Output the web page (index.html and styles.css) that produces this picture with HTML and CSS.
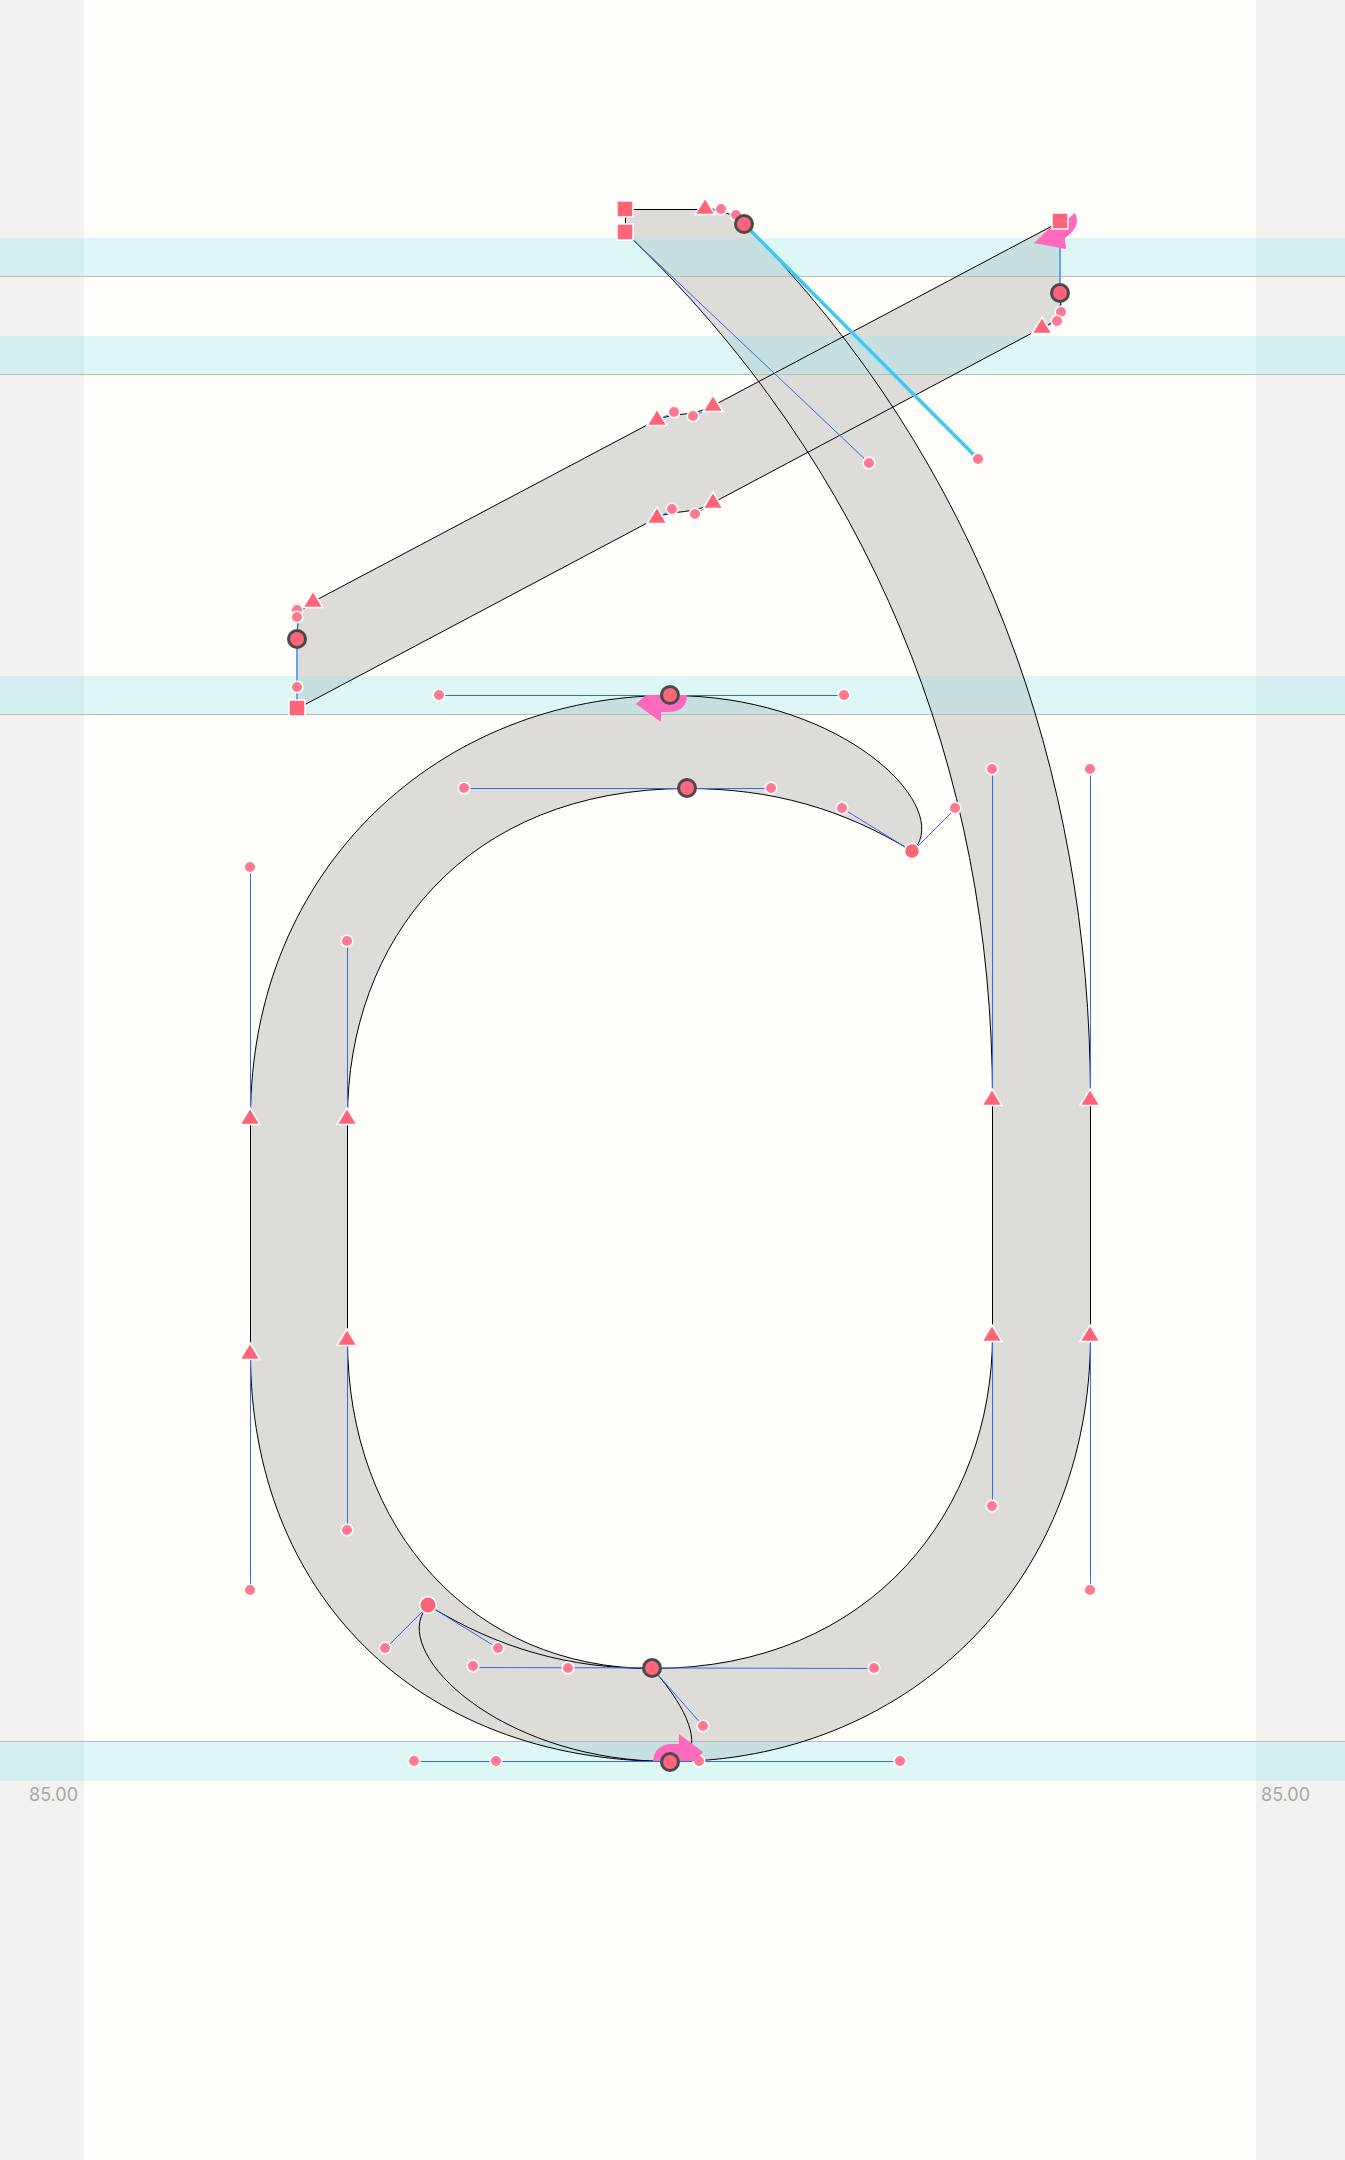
FILE: index.html
```html
<!DOCTYPE html>
<html>
<head>
    <title>Glyph Editor</title>
    <link rel="stylesheet" href="styles.css">
</head>
<body>
    <div class="editor">
        <div class="margin margin-left"><span class="metric">85.00</span></div>
        <div class="sheet"></div>
        <div class="margin margin-right"><span class="metric">85.00</span></div>

        <svg class="glyph" width="1345" height="2160" viewBox="0 0 1345 2160">
            <defs>
                <polygon id="tri" points="0,-10 10,6.5 -10,6.5"></polygon>
                <!-- outline: stem + bowl, tail, bar -->
                <path id="shape" d="
                    M625 209 L705 209 C721 209 736 215 744 224
                    C978 459 1090 769 1090 1099 L1090 1335
                    C1090 1590 900 1761 670 1761
                    C414 1761 250 1590 250 1353 L250 1118
                    C250 867 440 695 670 695
                    C844 695 955 808 912 851
                    C842 808 771 788 687 788
                    C464 788 347 941 347 1118 L347 1339
                    C347 1530 473 1668 652 1668
                    C874 1668 992 1506 992 1335 L992 1099
                    C992 769 869 463 625 232 Z
                    M670 1761 C496 1761 385 1648 428 1605
                    C498 1648 568 1668 652 1668
                    C703 1726 699 1761 670 1761 Z
                    M297 708 L297 639 C297 617 297 610 313 601
                    L657 419 C674 412 693 416 713 405
                    L1060 221 L1060 293 C1061 312 1057 321 1042 327
                    L713 502 C695 514 672 509 657 517 Z"></path>
            </defs>

            <use class="fill" href="#shape" x="0.5" y="0.5"></use>

            <!-- alignment zones, they tint the fill below -->
            <rect class="zone" x="0" y="238" width="1345" height="38"></rect>
            <rect class="zone" x="0" y="336" width="1345" height="38"></rect>
            <rect class="zone" x="0" y="676" width="1345" height="38"></rect>
            <rect class="zone" x="0" y="1741" width="1345" height="40"></rect>
            <line class="zone-edge" x1="0" y1="276.5" x2="1345" y2="276.5"></line>
            <line class="zone-edge" x1="0" y1="374.5" x2="1345" y2="374.5"></line>
            <line class="zone-edge" x1="0" y1="714.5" x2="1345" y2="714.5"></line>
            <line class="zone-edge" x1="0" y1="1741.5" x2="1345" y2="1741.5"></line>

            <use class="stroke" href="#shape" x="0.5" y="0.5"></use>

            <!-- handles -->
            <g class="handles" transform="translate(0.5 0.5)">
                <line x1="625" y1="232" x2="869" y2="463"></line>
                <line x1="705" y1="208" x2="721" y2="209"></line>
                <line x1="736" y1="215" x2="744" y2="224"></line>
                <line x1="1060" y1="293" x2="1061" y2="312"></line>
                <line x1="1057" y1="321" x2="1042" y2="327"></line>
                <line x1="297" y1="639" x2="297" y2="617"></line>
                <line x1="297" y1="610" x2="313" y2="601"></line>
                <line x1="657" y1="419" x2="674" y2="412"></line>
                <line x1="693" y1="416" x2="713" y2="405"></line>
                <line x1="657" y1="517" x2="672" y2="509"></line>
                <line x1="695" y1="514" x2="713" y2="502"></line>
                <line x1="440" y1="695" x2="844" y2="695"></line>
                <line x1="464" y1="788" x2="771" y2="788"></line>
                <line x1="912" y1="851" x2="842" y2="808"></line>
                <line x1="912" y1="851" x2="955" y2="808"></line>
                <line x1="1090" y1="1099" x2="1090" y2="769"></line>
                <line x1="992" y1="1099" x2="992" y2="769"></line>
                <line x1="250" y1="1118" x2="250" y2="867"></line>
                <line x1="347" y1="1118" x2="347" y2="941"></line>
                <line x1="1090" y1="1335" x2="1090" y2="1590"></line>
                <line x1="992" y1="1335" x2="992" y2="1506"></line>
                <line x1="250" y1="1353" x2="250" y2="1590"></line>
                <line x1="347" y1="1339" x2="347" y2="1530"></line>
                <line x1="414" y1="1761" x2="900" y2="1761"></line>
                <line x1="473" y1="1667" x2="874" y2="1668"></line>
                <line x1="652" y1="1668" x2="703" y2="1726"></line>
                <line x1="428" y1="1605" x2="385" y2="1648"></line>
                <line x1="428" y1="1605" x2="498" y2="1648"></line>
            </g>
            <line class="handle-wide" x1="1060" y1="221" x2="1060" y2="293"></line>
            <line class="handle-wide" x1="297" y1="639" x2="297" y2="708"></line>
            <line class="handle-selected" x1="744" y1="224" x2="978" y2="459"></line>

            <!-- off-curve points -->
            <g class="off">
                <circle cx="721" cy="209" r="5.8"></circle>
                <circle cx="736" cy="215" r="5.8"></circle>
                <circle cx="869" cy="463" r="5.8"></circle>
                <circle cx="978" cy="459" r="5.8"></circle>
                <circle cx="1061" cy="312" r="5.8"></circle>
                <circle cx="1057" cy="321" r="5.8"></circle>
                <circle cx="297" cy="610" r="5.8"></circle>
                <circle cx="297" cy="617" r="5.8"></circle>
                <circle cx="297" cy="687" r="5.8"></circle>
                <circle cx="674" cy="412" r="5.8"></circle>
                <circle cx="693" cy="416" r="5.8"></circle>
                <circle cx="672" cy="509" r="5.8"></circle>
                <circle cx="695" cy="514" r="5.8"></circle>
                <circle cx="439" cy="695" r="5.8"></circle>
                <circle cx="844" cy="695" r="5.8"></circle>
                <circle cx="464" cy="788" r="5.8"></circle>
                <circle cx="771" cy="788" r="5.8"></circle>
                <circle cx="842" cy="808" r="5.8"></circle>
                <circle cx="955" cy="808" r="5.8"></circle>
                <circle cx="992" cy="769" r="5.8"></circle>
                <circle cx="1090" cy="769" r="5.8"></circle>
                <circle cx="250" cy="867" r="5.8"></circle>
                <circle cx="347" cy="941" r="5.8"></circle>
                <circle cx="992" cy="1506" r="5.8"></circle>
                <circle cx="347" cy="1530" r="5.8"></circle>
                <circle cx="250" cy="1590" r="5.8"></circle>
                <circle cx="1090" cy="1590" r="5.8"></circle>
                <circle cx="385" cy="1648" r="5.8"></circle>
                <circle cx="498" cy="1648" r="5.8"></circle>
                <circle cx="473" cy="1666" r="5.8"></circle>
                <circle cx="568" cy="1668" r="5.8"></circle>
                <circle cx="874" cy="1668" r="5.8"></circle>
                <circle cx="703" cy="1726" r="5.8"></circle>
                <circle cx="414" cy="1761" r="5.8"></circle>
                <circle cx="496" cy="1761" r="5.8"></circle>
                <circle cx="699" cy="1761" r="5.8"></circle>
                <circle cx="900" cy="1761" r="5.8"></circle>
            </g>

            <!-- start point arrows -->
            <g class="arrows">
                <path d="M636 704 L646 695 L687 695 Q687 712 668 712 L661 712 L661 722 Z"></path>
                <path d="M703 1752 L679 1734 L679 1744 L672 1744 Q655 1744 653 1761 L694 1761 Z"></path>
                <path d="M1034 243 L1052 226 L1064 222 L1075 213 Q1082 226 1065 238 L1066 249 Z"></path>
            </g>

            <!-- on-curve points -->
            <g class="corner">
                <rect x="617" y="201" width="16" height="16"></rect>
                <rect x="617" y="224" width="16" height="16"></rect>
                <rect x="1052" y="213" width="16" height="16"></rect>
                <rect x="289" y="700" width="16" height="16"></rect>
                <circle cx="912" cy="851" r="7.5"></circle>
                <circle cx="428" cy="1605" r="8.3"></circle>
            </g>
            <g class="tangent">
                <use href="#tri" x="705" y="208"></use>
                <use href="#tri" x="1042" y="327"></use>
                <use href="#tri" x="313" y="601"></use>
                <use href="#tri" x="657" y="419"></use>
                <use href="#tri" x="713" y="405"></use>
                <use href="#tri" x="657" y="517"></use>
                <use href="#tri" x="713" y="502"></use>
                <use href="#tri" x="992" y="1099"></use>
                <use href="#tri" x="1090" y="1099"></use>
                <use href="#tri" x="992" y="1335"></use>
                <use href="#tri" x="1090" y="1335"></use>
                <use href="#tri" x="250" y="1118"></use>
                <use href="#tri" x="347" y="1118"></use>
                <use href="#tri" x="250" y="1353"></use>
                <use href="#tri" x="347" y="1339"></use>
            </g>
            <g class="smooth">
                <circle cx="744" cy="224" r="8.5"></circle>
                <circle cx="1060" cy="293" r="8.5"></circle>
                <circle cx="297" cy="639" r="8.5"></circle>
                <circle cx="670" cy="695" r="8.5"></circle>
                <circle cx="687" cy="788" r="8.5"></circle>
                <circle cx="652" cy="1668" r="8.5"></circle>
                <circle cx="670" cy="1762" r="8.5"></circle>
            </g>
        </svg>
    </div>
</body>
</html>
```

FILE: styles.css
```css
body { margin: 0; background: #fffefb; font-family: Inter, "Liberation Sans", sans-serif; }
.editor { position: relative; display: flex; width: 1345px; height: 2160px; overflow: hidden; }
.sheet { flex: 1; background: #fffefb; }
.margin { background: #f3f2f0; box-sizing: border-box; padding-top: 1784px; }
.margin-left { width: 84px; padding-left: 29px; }
.margin-right { width: 89px; padding-left: 5px; }
.metric { font-size: 18px; line-height: 21px; color: #a8a8a6; }
.glyph { position: absolute; top: 0; left: 0; }
.fill { fill: #dedcd9; fill-rule: nonzero; }
.stroke { fill: none; stroke: #000000; stroke-width: 1; }
.zone { fill: rgba(147, 234, 237, 0.32); }
.zone-edge { stroke: #b9bcb8; stroke-width: 1; }
.handles line { stroke: #2d6df0; stroke-width: 1; }
.handle-wide { stroke: #6a9ff3; stroke-width: 2; }
.handle-selected { stroke: #3ec8f6; stroke-width: 3.5; }
.off circle { fill: #ff7a90; stroke: #ffffff; stroke-width: 1.5; }
.arrows path { fill: #ff69bd; }
.corner rect, .corner circle { fill: #ff6478; stroke: #ffffff; stroke-width: 1.5; }
.tangent use { fill: #ff6478; stroke: #ffffff; stroke-width: 1.5; }
.smooth circle { fill: #ff6478; stroke: #4a4a4a; stroke-width: 3; }
```
